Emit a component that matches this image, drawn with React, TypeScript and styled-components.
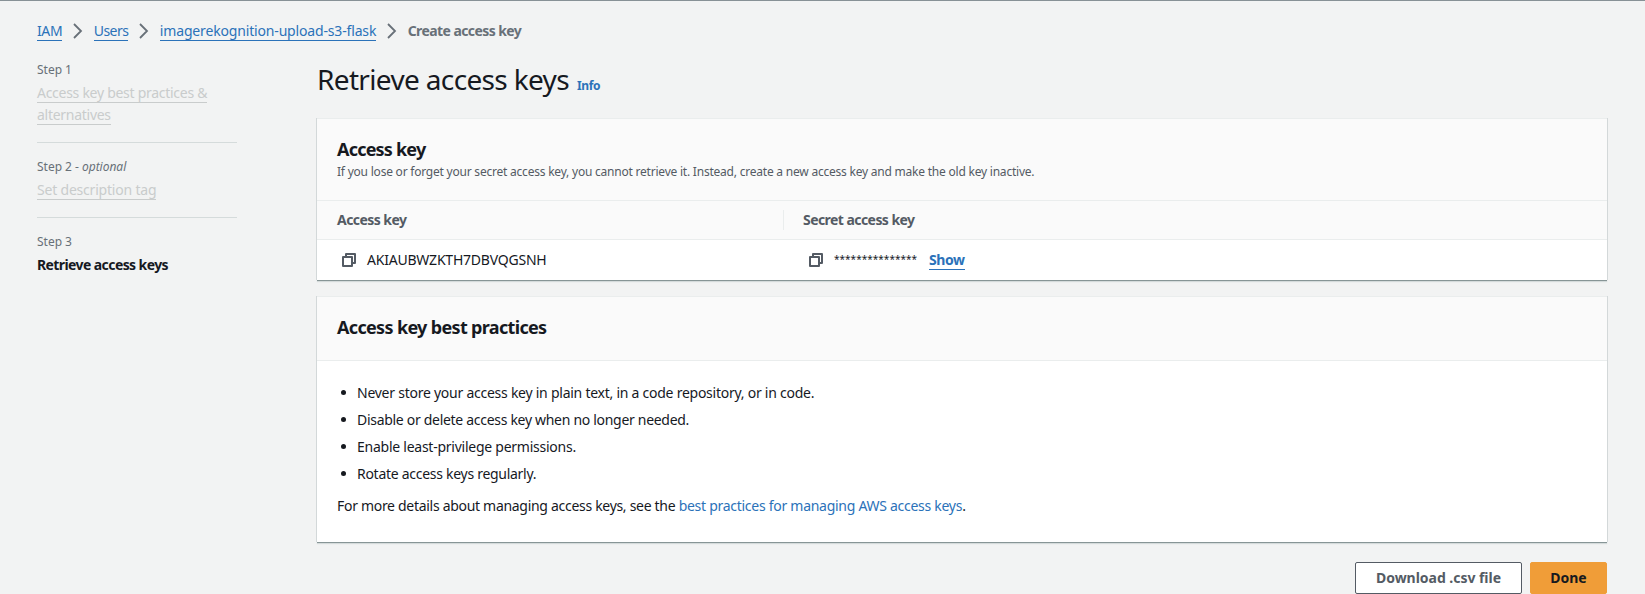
import React from 'react';
import styled, { createGlobalStyle, css } from 'styled-components';

const GlobalStyle = createGlobalStyle`
  * { box-sizing: border-box; }
  body {
    margin: 0;
    background: #f2f3f3;
    color: #16191f;
    font-family: 'Noto Sans', 'Liberation Sans', sans-serif;
    font-size: 14px;
    line-height: 22px;
    letter-spacing: -0.246px;
    overflow: hidden;
  }
  h1, h2, p, ul, ol { margin: 0; padding: 0; }
`;

const Page = styled.div`
  height: 594px;
  border-top: 1px solid #879196;
  padding: 19px 38px 0 37px;
  overflow: hidden;
`;

const Breadcrumbs = styled.nav`
  display: flex;
  align-items: flex-start;
  height: 41px;
`;

const Link = styled.a<{ $track?: number; $bold?: boolean; $plain?: boolean }>`
  color: #2b72b9;
  text-decoration: none;
  white-space: nowrap;
  font-weight: ${(p) => (p.$bold ? 700 : 400)};
  letter-spacing: ${(p) => p.$track ?? -0.246}px;
  ${(p) =>
    !p.$plain &&
    css`
      padding-top: 2px;
      line-height: 18px;
      border-bottom: 1px solid currentColor;
    `}
`;

const CurrentCrumb = styled.span`
  color: #687078;
  font-weight: 700;
  letter-spacing: -0.585px;
  white-space: nowrap;
`;

const ChevronIcon = styled.svg`
  display: block;
  width: 10px;
  height: 16px;
  margin: 3px 10.5px 0 11px;
  fill: none;
  stroke: #687078;
  stroke-width: 1.8;
`;

const Columns = styled.div`
  display: flex;
  align-items: flex-start;
`;

const Steps = styled.ol`
  list-style: none;
  width: 200px;
  margin: 1px 80px 0 0;
  flex: none;
`;

const Step = styled.li`
  padding-bottom: 13px;
  & + & {
    border-top: 1px solid #d5dbdb;
    padding-top: 16px;
  }
`;

const StepLabel = styled.div`
  color: #687078;
  font-size: 12px;
  line-height: 16px;
  letter-spacing: -0.02px;
  margin-bottom: 4px;
`;

const StepName = styled.div<{ $active?: boolean; $track?: number }>`
  line-height: 22px;
  ${(p) =>
    p.$active
      ? css`
          color: #16191f;
          font-weight: 700;
          letter-spacing: -0.59px;
        `
      : css`
          color: #c9cccc;
          letter-spacing: ${p.$track ?? -0.277}px;
          padding-bottom: 3px;
        `}
`;

const DisabledLink = styled.span`
  border-bottom: 1px solid currentColor;
`;

const Main = styled.main`
  flex: 1;
  min-width: 0;
`;

const TitleRow = styled.header`
  display: flex;
  align-items: baseline;
  height: 57px;
`;

const Title = styled.h1`
  font-size: 28px;
  line-height: 36px;
  font-weight: 400;
  letter-spacing: -0.65px;
`;

const InfoLink = styled.a`
  color: #2b72b9;
  font-size: 12px;
  font-weight: 700;
  letter-spacing: -0.4px;
  margin-left: 8px;
`;

const Card = styled.section<{ $gap?: number }>`
  background: #fff;
  border-top: 1px solid #eaeded;
  box-shadow: 0 1px 0 0 #879596, 0 2px 1px 0 #d5dbdb, -1px 0 0 0 #d3d8d9, 1px 0 0 0 #d3d8d9;
  margin-bottom: ${(p) => p.$gap ?? 0}px;
`;

const CardHeader = styled.div<{ $height: number }>`
  height: ${(p) => p.$height}px;
  padding: 19px 20px 0;
  background: #fafafa;
  border-bottom: 1px solid #eaeded;
`;

const Heading = styled.h2<{ $track: number }>`
  font-size: 18px;
  line-height: 22px;
  font-weight: 700;
  letter-spacing: ${(p) => p.$track}px;
`;

const Description = styled.p`
  color: #545b64;
  font-size: 12px;
  line-height: 16px;
  letter-spacing: -0.218px;
  margin-top: 4px;
`;

const HeadRow = styled.div`
  display: grid;
  grid-template-columns: 466px 1fr;
  align-items: center;
  height: 39px;
  background: #fafafa;
  border-bottom: 1px solid #eaeded;
`;

const HeadCell = styled.div<{ $divided?: boolean }>`
  height: 20px;
  line-height: 20px;
  padding: 0 20px 0 ${(p) => (p.$divided ? 19 : 20)}px;
  color: #545b64;
  font-weight: 700;
  letter-spacing: -0.56px;
  border-left: ${(p) => (p.$divided ? '1px solid #eaeded' : '0')};
`;

const DataRow = styled.div`
  display: grid;
  grid-template-columns: 467px 1fr;
  height: 40px;
`;

const DataCell = styled.div`
  display: flex;
  align-items: flex-start;
  padding: 9px 25px 0;
`;

const CopyIcon = styled.svg`
  display: block;
  width: 14px;
  height: 14px;
  margin: 4px 11px 0 0;
  fill: none;
  stroke: #545b64;
  stroke-width: 2;
  stroke-linejoin: round;
`;

const KeyText = styled.span`
  letter-spacing: -0.22px;
`;

const SecretMask = styled.span`
  width: 95px;
  font-size: 10px;
  line-height: 20px;
  letter-spacing: 0.03px;
`;

const Practices = styled.div`
  height: 181px;
  padding: 18px 20px 0;
`;

const BulletList = styled.ul`
  list-style: none;
`;

const Bullet = styled.li<{ $track?: number }>`
  display: flex;
  align-items: center;
  height: 27px;
  letter-spacing: ${(p) => p.$track ?? -0.25}px;
  &::before {
    content: '';
    width: 5px;
    height: 5px;
    margin: 0 11px 0 4px;
    border-radius: 50%;
    background: #16191f;
  }
`;

const More = styled.p`
  margin-top: 8px;
  letter-spacing: -0.3px;
`;

const Actions = styled.footer`
  display: flex;
  justify-content: flex-end;
  gap: 8px;
`;

const Button = styled.button<{ $primary?: boolean }>`
  width: ${(p) => (p.$primary ? 77 : 167)}px;
  height: 32px;
  padding: 0;
  border: 1px solid ${(p) => (p.$primary ? '#f09d38' : '#545b64')};
  border-radius: 2px;
  background: ${(p) => (p.$primary ? '#f09d38' : '#fff')};
  color: ${(p) => (p.$primary ? '#16191f' : '#545b64')};
  font: 700 14px/20px 'Noto Sans', 'Liberation Sans', sans-serif;
  letter-spacing: -0.03px;
`;

const Chevron = () => (
  <ChevronIcon viewBox="0 0 10 16">
    <path d="M1 1l7 7-7 7" />
  </ChevronIcon>
);

const Copy = () => (
  <CopyIcon viewBox="0 0 14 14">
    <path d="M1 4h9v9H1z" />
    <path d="M4 4V1h9v9h-3" />
  </CopyIcon>
);

export default function App() {
  return (
    <>
      <GlobalStyle />
      <Page>
        <Breadcrumbs>
          <Link $track={-0.4}>IAM</Link>
          <Chevron />
          <Link $track={-0.546}>Users</Link>
          <Chevron />
          <Link $track={-0.162}>imagerekognition-upload-s3-flask</Link>
          <Chevron />
          <CurrentCrumb>Create access key</CurrentCrumb>
        </Breadcrumbs>
        <Columns>
          <Steps>
            <Step>
              <StepLabel>Step 1</StepLabel>
              <StepName><DisabledLink>Access key best practices &amp; alternatives</DisabledLink></StepName>
            </Step>
            <Step>
              <StepLabel>Step 2 - <i>optional</i></StepLabel>
              <StepName $track={-0.2}><DisabledLink>Set description tag</DisabledLink></StepName>
            </Step>
            <Step>
              <StepLabel>Step 3</StepLabel>
              <StepName $active>Retrieve access keys</StepName>
            </Step>
          </Steps>
          <Main>
            <TitleRow>
              <Title>Retrieve access keys</Title>
              <InfoLink>Info</InfoLink>
            </TitleRow>
            <Card $gap={16}>
              <CardHeader $height={82}>
                <Heading $track={-0.8}>Access key</Heading>
                <Description>
                  If you lose or forget your secret access key, you cannot retrieve it. Instead, create a new access key and make the old key inactive.
                </Description>
              </CardHeader>
              <HeadRow>
                <HeadCell>Access key</HeadCell>
                <HeadCell $divided>Secret access key</HeadCell>
              </HeadRow>
              <DataRow>
                <DataCell>
                  <Copy />
                  <KeyText>AKIAUBWZKTH7DBVQGSNH</KeyText>
                </DataCell>
                <DataCell>
                  <Copy />
                  <SecretMask>***************</SecretMask>
                  <Link $bold $track={-0.4}>Show</Link>
                </DataCell>
              </DataRow>
            </Card>
            <Card $gap={20}>
              <CardHeader $height={64}>
                <Heading $track={-0.664}>Access key best practices</Heading>
              </CardHeader>
              <Practices>
                <BulletList>
                  <Bullet>Never store your access key in plain text, in a code repository, or in code.</Bullet>
                  <Bullet $track={-0.3}>Disable or delete access key when no longer needed.</Bullet>
                  <Bullet>Enable least-privilege permissions.</Bullet>
                  <Bullet $track={-0.28}>Rotate access keys regularly.</Bullet>
                </BulletList>
                <More>
                  For more details about managing access keys, see the{' '}
                  <Link $plain $track={-0.277}>best practices for managing AWS access keys</Link>.
                </More>
              </Practices>
            </Card>
            <Actions>
              <Button>Download .csv file</Button>
              <Button $primary>Done</Button>
            </Actions>
          </Main>
        </Columns>
      </Page>
    </>
  );
}
